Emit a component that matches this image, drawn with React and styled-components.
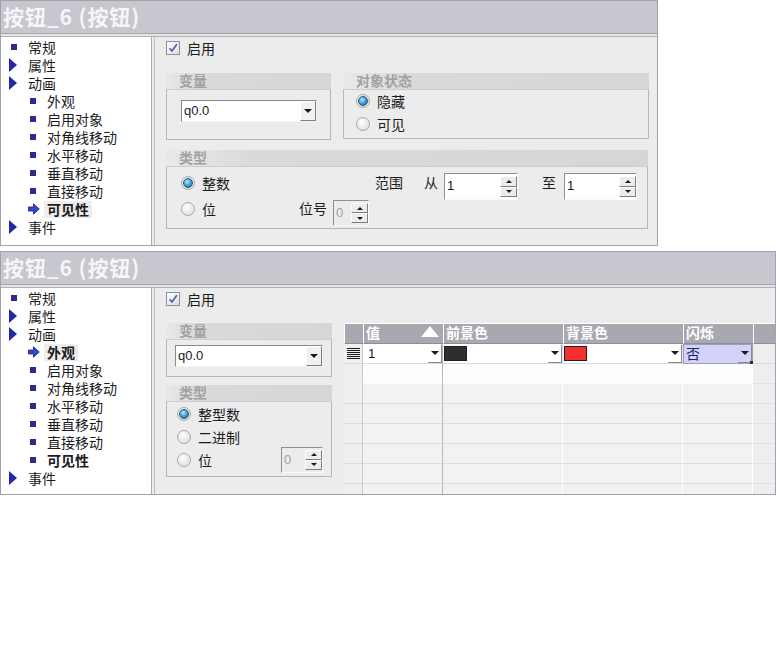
import React from 'react';
import styled, { createGlobalStyle } from 'styled-components';

const Global = createGlobalStyle`
  body {
    margin: 0;
    background: #ffffff;
    font-family: "Noto Sans CJK SC", "Liberation Sans", sans-serif;
    font-size: 14px;
    color: #1c1c1c;
  }
  * { box-sizing: border-box; }
`

const Page = styled.div`
  display: flex;
  flex-direction: column;
  gap: 5px;
  width: 776px;
`
const Panel = styled.div`
  width: ${p => p.$w}px;
  height: ${p => p.$h}px;
  border: 1px solid #a2a2aa;
  display: flex;
  flex-direction: column;
  background: #ececec;
  overflow: hidden;
`
const TitleBar = styled.div`
  height: 33px;
  flex: none;
  background: #c6c7cf;
  border-bottom: 1px solid #a3a4ac;
  padding-left: 2px;
  color: #f6f6f6;
  font-family: "Noto Sans CJK SC", sans-serif;
  font-weight: 700;
  font-size: 21px;
  line-height: 31px;
  letter-spacing: 0.9px;
`
const Separator = styled.div`
  height: 3px;
  flex: none;
  background: #e6e6e6;
  border-bottom: 1px solid #b2b2b2;
`
const Body = styled.div`
  flex: 1;
  display: flex;
  min-height: 0;
`
const Tree = styled.div`
  width: 151px;
  flex: none;
  background: #ffffff;
  border-right: 1px solid #aaaaaa;
  padding-top: 1px;
  margin-right: 2px;
`
const TreeItem = styled.div`
  height: 18px;
  display: flex;
  align-items: center;
  padding-left: ${p => (p.$level === 2 ? 27 : 8)}px;
`
const IconBox = styled.span`
  width: 19px;
  flex: none;
  display: flex;
  align-items: center;
`
const Bullet = styled.span`
  width: 6px;
  height: 6px;
  margin-left: 2px;
  background: #2c2c8e;
`
const Triangle = styled.span`
  width: 0;
  height: 0;
  border-left: 8px solid #2727a6;
  border-top: 7px solid transparent;
  border-bottom: 7px solid transparent;
`
const ItemLabel = styled.span`
  line-height: 17px;
  font-weight: ${p => (p.$bold ? 700 : 400)};
  background: ${p => (p.$selected ? '#ededed' : 'transparent')};
  padding: 0 ${p => (p.$selected ? 3 : 0)}px;
  margin-left: ${p => (p.$selected ? -3 : 0)}px;
  white-space: nowrap;
`
const Content = styled.div`
  flex: 1;
  display: flex;
  flex-direction: column;
  border-left: 1px solid #bcbcbc;
  padding: 3px ${p => p.$pr}px 0 11px;
  min-width: 0;
`
const CheckRow = styled.label`
  display: flex;
  align-items: center;
  gap: 7px;
  height: 15px;
`
const CheckBox = styled.span`
  width: 14px;
  height: 14px;
  border: 1px solid #8d8f9c;
  background: linear-gradient(135deg, #ffffff, #dcdde2);
  display: flex;
  align-items: center;
  justify-content: center;
`
const Row = styled.div`
  display: flex;
  gap: 12px;
  margin-top: ${p => p.$mt}px;
`
const Group = styled.div`
  width: ${p => p.$w}px;
  flex: none;
  display: flex;
  flex-direction: column;
`
const GroupHeader = styled.div`
  height: 16px;
  background: linear-gradient(90deg, #e9e9e9 0%, #dadada 18%, #d6d6d6 100%);
  color: #a2a2a2;
  font-weight: 700;
  font-size: 14px;
  line-height: 15px;
  padding-left: 13px;
`
const GroupBody = styled.div`
  height: ${p => p.$h}px;
  border: 1px solid #b6b6b6;
  border-top-color: #cdcdcd;
  padding: ${p => p.$pad};
  display: flex;
  flex-direction: column;
`
const Select = styled.div`
  width: ${p => p.$w}px;
  height: 22px;
  display: flex;
  background: #ffffff;
  border: 1px solid;
  border-color: #8a8a8a #f4f4f4 #f4f4f4 #8a8a8a;
`
const ValueText = styled.span`
  flex: 1;
  font-family: "Liberation Sans", sans-serif;
  font-size: 13px;
  line-height: 20px;
  padding-left: 2px;
  color: ${p => (p.$disabled ? '#a0a0a0' : '#1a1a1a')};
`
const DropButton = styled.span`
  width: 16px;
  flex: none;
  background: #f1f1f1;
  border: 1px solid;
  border-color: #ffffff #7c7c7c #7c7c7c #ffffff;
  display: flex;
  align-items: center;
  justify-content: center;
`
const DownArrow = styled.span`
  width: 0;
  height: 0;
  border-left: 4px solid transparent;
  border-right: 4px solid transparent;
  border-top: 4px solid #1a1a1a;
`
const UpArrow = styled.span`
  width: 0;
  height: 0;
  border-left: 3px solid transparent;
  border-right: 3px solid transparent;
  border-bottom: 3px solid #1a1a1a;
`
const SmallDown = styled(UpArrow)`
  border-bottom: none;
  border-top: 3px solid #1a1a1a;
`
const Spin = styled.div`
  width: ${p => p.$w}px;
  height: ${p => p.$h}px;
  flex: none;
  display: flex;
  background: ${p => (p.$disabled ? '#ececec' : '#ffffff')};
  border: 1px solid;
  border-color: #909090 #fafafa #fafafa #909090;
  padding: 2px 0;
`
const SpinButtons = styled.div`
  width: 17px;
  flex: none;
  display: flex;
  flex-direction: column;
`
const SpinButton = styled.span`
  flex: 1;
  background: #ececec;
  border: 1px solid;
  border-color: #ffffff #7e7e7e #7e7e7e #ffffff;
  display: flex;
  align-items: center;
  justify-content: center;
`
const RadioCell = styled.span`
  width: ${p => (p.$w ? `${p.$w}px` : 'auto')};
  height: 20px;
  flex: none;
  display: flex;
  align-items: center;
  gap: 7px;
`
const Label = styled.span`
  height: 20px;
  line-height: 19px;
  margin-left: ${p => p.$ml || 0}px;
  margin-right: ${p => p.$mr || 0}px;
  white-space: nowrap;
`
const RadioRow = styled.div`
  display: flex;
  align-items: ${p => (p.$top !== undefined ? 'flex-start' : 'center')};
  height: ${p => p.$h}px;
  & > ${RadioCell}, & > ${Label} {
    margin-top: ${p => p.$top || 0}px;
  }
`
const Push = styled.span`
  flex: 1;
`
const Radio = styled.span`
  width: 14px;
  height: 14px;
  border-radius: 50%;
  border: 1px solid #a9a9a9;
  background: radial-gradient(circle at 40% 35%, #ffffff, #d7d7d7);
  display: flex;
  align-items: center;
  justify-content: center;
  &::after {
    content: '';
    display: ${p => (p.$on ? 'block' : 'none')};
    width: 8px;
    height: 8px;
    border-radius: 50%;
    background: radial-gradient(circle at 40% 35%, #bfe8fb, #3a95cf 55%, #1b5f93);
    border: 1px solid #23577f;
  }
`
const Column = styled.div`
  width: 166px;
  flex: none;
  display: flex;
  flex-direction: column;
  gap: 8px;
`
const Lower = styled.div`
  flex: 1;
  min-height: 0;
  display: flex;
  gap: 12px;
  margin-top: 17px;
`
const Table = styled.div`
  flex: 1;
  min-width: 0;
  overflow: hidden;
  display: grid;
  grid-template-columns: 19px 80px 120px 120px 70px 1fr;
  grid-auto-rows: 20px;
  align-content: start;
  border-top: 1px solid #ffffff;
  background: #eeeeee;
`
const HeadCell = styled.div`
  background: #a8a8b0;
  border-left: 1px solid #ffffff;
  border-bottom: 1px solid #8e8e96;
  color: #ffffff;
  font-weight: 700;
  font-size: 14px;
  line-height: 16px;
  padding-left: 2px;
  display: flex;
  align-items: flex-start;
`
const SortMark = styled.span`
  margin: 2px 4px 0 auto;
  width: 0;
  height: 0;
  border-left: 9px solid transparent;
  border-right: 9px solid transparent;
  border-bottom: 11px solid #ffffff;
`
const Cell = styled.div`
  background: ${p => p.$bg};
  border-right: 1px solid ${p => p.$line};
  border-bottom: 1px solid ${p => p.$bottom || '#d9d9d9'};
  display: flex;
  align-items: center;
  padding-left: ${p => p.$pl || 0}px;
  position: relative;
`
const Swatch = styled.span`
  width: 23px;
  height: 15px;
  background: ${p => p.$color};
  border: 1px solid #2a1a1a;
`
const CellDrop = styled.span`
  margin-left: auto;
  height: 18px;
  width: 14px;
  display: flex;
  align-items: center;
  justify-content: center;
  border-right: 1px solid #8a8a8a;
  border-bottom: 1px solid #8a8a8a;
`
const BlinkCell = styled(Cell)`
  background: #d3d3fa;
  outline: 1px solid #9d9dc4;
  outline-offset: -1px;
  color: #202066;
  line-height: 17px;
`
const Handle = styled.span`
  position: absolute;
  right: -2px;
  bottom: -2px;
  width: 4px;
  height: 4px;
  background: #303030;
`

const Check = () => (
  <CheckBox>
    <svg width="10" height="10" viewBox="0 0 10 10">
      <path d="M1.5 5.2 L4 8 L8.8 1.2" fill="none" stroke="#4b5ea8" strokeWidth="1.7" />
    </svg>
  </CheckBox>
)

const PointArrow = () => (
  <svg width="12" height="12" viewBox="0 0 12 12">
    <path d="M0.5 4 H5.5 V0.8 L11.3 6 L5.5 11.2 V8 H0.5 Z" fill="#3347d6" stroke="#1c1c78" strokeWidth="0.8" />
  </svg>
)

const Dropdown = ({ value, width }) => (
  <Select $w={width}>
    <ValueText>{value}</ValueText>
    <DropButton><DownArrow /></DropButton>
  </Select>
)

const Spinner = ({ value, w, h, disabled }) => (
  <Spin $w={w} $h={h} $disabled={disabled}>
    <ValueText $disabled={disabled}>{value}</ValueText>
    <SpinButtons>
      <SpinButton><UpArrow /></SpinButton>
      <SpinButton><SmallDown /></SpinButton>
    </SpinButtons>
  </Spin>
)

const RowIcon = () => (
  <svg width="13" height="11" viewBox="0 0 13 11">
    {[0, 1, 2, 3, 4, 5].map(i => (
      <rect key={i} x="0" y={i * 2} width="13" height="1" fill="#1a1a1a" />
    ))}
  </svg>
)

const treeItems = [
  { t: '常规', level: 1, icon: 'bullet' },
  { t: '属性', level: 1, icon: 'tri' },
  { t: '动画', level: 1, icon: 'tri' },
  { t: '外观', level: 2, icon: 'bullet' },
  { t: '启用对象', level: 2, icon: 'bullet' },
  { t: '对角线移动', level: 2, icon: 'bullet' },
  { t: '水平移动', level: 2, icon: 'bullet' },
  { t: '垂直移动', level: 2, icon: 'bullet' },
  { t: '直接移动', level: 2, icon: 'bullet' },
  { t: '可见性', level: 2, icon: 'bullet' },
  { t: '事件', level: 1, icon: 'tri' },
]

function TreeList({ selected, boldItems }) {
  return (
    <Tree>
      {treeItems.map(item => {
        const isSel = item.t === selected
        return (
          <TreeItem key={item.t} $level={item.level}>
            <IconBox>
              {isSel ? <PointArrow /> : item.icon === 'tri' ? <Triangle /> : <Bullet />}
            </IconBox>
            <ItemLabel $selected={isSel} $bold={isSel || boldItems.includes(item.t)}>{item.t}</ItemLabel>
          </TreeItem>
        )
      })}
    </Tree>
  )
}

function FirstPanel() {
  return (
    <Panel $w={658} $h={246}>
      <TitleBar>按钮_6 (按钮)</TitleBar>
      <Separator />
      <Body>
        <TreeList selected="可见性" boldItems={[]} />
        <Content $pr={9}>
          <CheckRow><Check />启用</CheckRow>
          <Row $mt={18}>
            <Group $w={165}>
              <GroupHeader>变量</GroupHeader>
              <GroupBody $h={51} $pad="10px 0 0 14px">
                <Dropdown value="q0.0" width={136} />
              </GroupBody>
            </Group>
            <Group $w={306}>
              <GroupHeader>对象状态</GroupHeader>
              <GroupBody $h={50} $pad="0 0 0 12px">
                <RadioRow $h={22}><RadioCell><Radio $on />隐藏</RadioCell></RadioRow>
                <RadioRow $h={24}><RadioCell><Radio />可见</RadioCell></RadioRow>
              </GroupBody>
            </Group>
          </Row>
          <Row $mt={10}>
            <Group $w={482}>
              <GroupHeader>类型</GroupHeader>
              <GroupBody $h={63} $pad="6px 0 0 14px">
                <RadioRow $h={27} $top={0}>
                  <RadioCell $w={194}><Radio $on />整数</RadioCell>
                  <Label $mr={21}>范围</Label>
                  <Label $mr={6}>从</Label>
                  <Spinner value="1" w={74} h={27} />
                  <Label $ml={24} $mr={8}>至</Label>
                  <Spinner value="1" w={73} h={27} />
                </RadioRow>
                <RadioRow $h={26} $top={-1}>
                  <RadioCell $w={118}><Radio />位</RadioCell>
                  <Label $mr={6}>位号</Label>
                  <Spinner value="0" w={36} h={26} disabled />
                </RadioRow>
              </GroupBody>
            </Group>
          </Row>
        </Content>
      </Body>
    </Panel>
  )
}

const emptyRows = [0, 1, 2, 3, 4, 5, 6]

function PropertyTable() {
  return (
    <Table>
      <HeadCell />
      <HeadCell>值<SortMark /></HeadCell>
      <HeadCell>前景色</HeadCell>
      <HeadCell>背景色</HeadCell>
      <HeadCell>闪烁</HeadCell>
      <HeadCell />

      <Cell $bg="#efefef" $line="#c8c8c8" $pl={3}><RowIcon /></Cell>
      <Cell $bg="#ffffff" $line="#b8b8b8" $pl={3}>
        <ValueText>1</ValueText>
        <CellDrop><DownArrow /></CellDrop>
      </Cell>
      <Cell $bg="#ffffff" $line="#e4e4e4" $pl={1}>
        <Swatch $color="#2e2e2e" />
        <CellDrop><DownArrow /></CellDrop>
      </Cell>
      <Cell $bg="#ffffff" $line="#e4e4e4" $pl={1}>
        <Swatch $color="#f23030" />
        <CellDrop><DownArrow /></CellDrop>
      </Cell>
      <BlinkCell $line="#d3d3fa" $bottom="#9d9dc4" $pl={3}>
        否
        <CellDrop><DownArrow /></CellDrop>
        <Handle />
      </BlinkCell>
      <Cell $bg="#eeeeee" $line="#eeeeee" />

      {emptyRows.map(i => {
        const first = i === 0
        const bg = first ? '#fdfdfd' : '#f2f2f2'
        const bottom = first ? '#fdfdfd' : '#dcdcdc'
        return (
          <React.Fragment key={i}>
            <Cell $bg="#efefef" $line="#c8c8c8" $bottom={first ? '#efefef' : '#dcdcdc'} />
            <Cell $bg={bg} $line="#b8b8b8" $bottom={bottom} />
            <Cell $bg={bg} $line="#ffffff" $bottom={bottom} />
            <Cell $bg={bg} $line="#ffffff" $bottom={bottom} />
            <Cell $bg={bg} $line="#ffffff" $bottom={bottom} />
            <Cell $bg="#eeeeee" $line="#eeeeee" $bottom="#e2e2e2" />
          </React.Fragment>
        )
      })}
    </Table>
  )
}

function SecondPanel() {
  return (
    <Panel $w={776} $h={244}>
      <TitleBar>按钮_6 (按钮)</TitleBar>
      <Separator />
      <Body>
        <TreeList selected="外观" boldItems={['可见性']} />
        <Content $pr={0}>
          <CheckRow><Check />启用</CheckRow>
          <Lower>
            <Column>
              <Group $w={166}>
                <GroupHeader>变量</GroupHeader>
                <GroupBody $h={38} $pad="5px 0 0 8px">
                  <Dropdown value="q0.0" width={148} />
                </GroupBody>
              </Group>
              <Group $w={166}>
                <GroupHeader>类型</GroupHeader>
                <GroupBody $h={76} $pad="0 8px 0 10px">
                  <RadioRow $h={23}><RadioCell><Radio $on />整型数</RadioCell></RadioRow>
                  <RadioRow $h={23}><RadioCell><Radio />二进制</RadioCell></RadioRow>
                  <RadioRow $h={23}>
                    <RadioCell><Radio />位</RadioCell>
                    <Push />
                    <Spinner value="0" w={42} h={26} disabled />
                  </RadioRow>
                </GroupBody>
              </Group>
            </Column>
            <PropertyTable />
          </Lower>
        </Content>
      </Body>
    </Panel>
  )
}

export default function App() {
  return (
    <>
      <Global />
      <Page>
        <FirstPanel />
        <SecondPanel />
      </Page>
    </>
  )
}
